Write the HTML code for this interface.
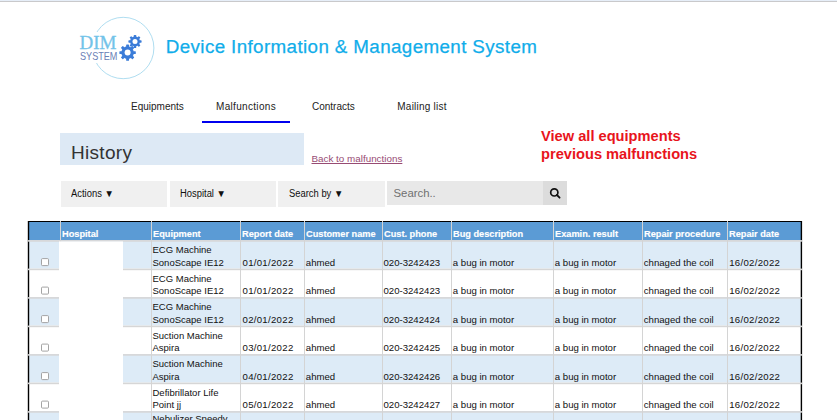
<!DOCTYPE html>
<html><head><meta charset="utf-8">
<style>
*{box-sizing:border-box;margin:0;padding:0}
html,body{width:837px;height:420px;overflow:hidden;background:#fff;font-family:"Liberation Sans",sans-serif;position:relative}
.abs{position:absolute;white-space:nowrap}
#topbar{position:absolute;left:0;top:0;width:837px;height:2px;background:linear-gradient(#e6eef8 0,#e6eef8 40%,#c9c9cb 40%,#c9c9cb 100%)}
#title{left:165.8px;top:35px;font-size:18.8px;letter-spacing:0.38px;color:#10adea;-webkit-text-stroke:0.25px #10adea;line-height:24px}
.nav{top:100.5px;font-size:10px;color:#222;line-height:12px}
#navline{left:202px;top:121px;width:88px;height:2px;background:#0000ee}
#hist{left:60px;top:133px;width:244px;height:32px;background:#dde9f5}
#histtxt{left:71px;top:141.5px;font-size:19px;letter-spacing:0.3px;line-height:22px;color:#333}
#back{left:311.5px;top:152.8px;font-size:9.85px;line-height:11px;color:#974b73;text-decoration:underline}
#red{left:541px;top:127px;font-size:14.65px;line-height:18px;color:#e8141c;font-weight:bold}
.btn{position:absolute;top:181px;height:26px;background:#f0f0f0}
.btxt{top:188px;font-size:10px;line-height:11px;color:#111;transform:scaleX(0.94);transform-origin:left top}
#search{left:387px;top:181px;width:156px;height:24px;background:#e8e8e8}
#stxt{left:393.5px;top:186.2px;font-size:11.35px;line-height:14px;color:#707070}
#sbtn{left:543px;top:181px;width:24px;height:24px;background:#dcdcdc}
.th{top:227.5px;font-size:9.6px;line-height:11px;color:#fff;font-weight:bold;-webkit-text-stroke:0.15px #fff;transform:scaleX(0.96);transform-origin:left top}
.td{font-size:9.6px;line-height:11px;color:#111}
.eq{font-size:9.5px;line-height:11px;color:#111}
.ph{font-size:9.6px}
.ch{font-size:9.6px}
.dt{letter-spacing:0.3px}
</style></head><body>
<div id="topbar"></div>

<!-- logo -->
<svg class="abs" style="left:0;top:0" width="180" height="90" viewBox="0 0 180 90">
  <circle cx="123.2" cy="48" r="30.7" fill="none" stroke="#a6d9ee" stroke-width="0.9"/>
  <rect x="77" y="32" width="24" height="31" fill="#fff"/>
  <circle cx="127.6" cy="52.6" r="6.3" fill="#3b7cd8"/>
  <rect x="126.15" y="44.40" width="2.9" height="2.90" rx="0.6" fill="#3b7cd8" transform="rotate(0.0 127.6 52.6)"/>
  <rect x="126.15" y="44.40" width="2.9" height="2.90" rx="0.6" fill="#3b7cd8" transform="rotate(45.0 127.6 52.6)"/>
  <rect x="126.15" y="44.40" width="2.9" height="2.90" rx="0.6" fill="#3b7cd8" transform="rotate(90.0 127.6 52.6)"/>
  <rect x="126.15" y="44.40" width="2.9" height="2.90" rx="0.6" fill="#3b7cd8" transform="rotate(135.0 127.6 52.6)"/>
  <rect x="126.15" y="44.40" width="2.9" height="2.90" rx="0.6" fill="#3b7cd8" transform="rotate(180.0 127.6 52.6)"/>
  <rect x="126.15" y="44.40" width="2.9" height="2.90" rx="0.6" fill="#3b7cd8" transform="rotate(225.0 127.6 52.6)"/>
  <rect x="126.15" y="44.40" width="2.9" height="2.90" rx="0.6" fill="#3b7cd8" transform="rotate(270.0 127.6 52.6)"/>
  <rect x="126.15" y="44.40" width="2.9" height="2.90" rx="0.6" fill="#3b7cd8" transform="rotate(315.0 127.6 52.6)"/>
  <circle cx="127.6" cy="52.6" r="3.0" fill="#fff"/>
  <circle cx="135.0" cy="41.5" r="4.9" fill="#3b7cd8"/>
  <rect x="133.80" y="34.90" width="2.4" height="2.70" rx="0.6" fill="#3b7cd8" transform="rotate(0.0 135.0 41.5)"/>
  <rect x="133.80" y="34.90" width="2.4" height="2.70" rx="0.6" fill="#3b7cd8" transform="rotate(45.0 135.0 41.5)"/>
  <rect x="133.80" y="34.90" width="2.4" height="2.70" rx="0.6" fill="#3b7cd8" transform="rotate(90.0 135.0 41.5)"/>
  <rect x="133.80" y="34.90" width="2.4" height="2.70" rx="0.6" fill="#3b7cd8" transform="rotate(135.0 135.0 41.5)"/>
  <rect x="133.80" y="34.90" width="2.4" height="2.70" rx="0.6" fill="#3b7cd8" transform="rotate(180.0 135.0 41.5)"/>
  <rect x="133.80" y="34.90" width="2.4" height="2.70" rx="0.6" fill="#3b7cd8" transform="rotate(225.0 135.0 41.5)"/>
  <rect x="133.80" y="34.90" width="2.4" height="2.70" rx="0.6" fill="#3b7cd8" transform="rotate(270.0 135.0 41.5)"/>
  <rect x="133.80" y="34.90" width="2.4" height="2.70" rx="0.6" fill="#3b7cd8" transform="rotate(315.0 135.0 41.5)"/>
  <circle cx="135.0" cy="41.5" r="2.5" fill="#fff"/>
</svg>
<div class="abs" style="left:79.5px;top:33px;font-family:'Liberation Serif',serif;font-size:19px;line-height:19px;color:#72c3e9;-webkit-text-stroke:0.3px #72c3e9">DIM</div>
<div class="abs" style="left:79.8px;top:51.2px;font-size:10.6px;line-height:11px;color:#6a80b6;transform:scaleX(0.86);transform-origin:left top">SYSTEM</div>

<div id="title" class="abs">Device Information &amp; Management System</div>

<div class="abs nav" style="left:131px">Equipments</div>
<div class="abs nav" style="left:216px;letter-spacing:0.32px">Malfunctions</div>
<div class="abs nav" style="left:312px">Contracts</div>
<div class="abs nav" style="left:397.3px;letter-spacing:0.23px">Mailing list</div>
<div id="navline" class="abs"></div>

<div id="hist" class="abs"></div>
<div id="histtxt" class="abs">History</div>
<div id="back" class="abs">Back to malfunctions</div>
<div id="red" class="abs">View all equipments<br>previous malfunctions</div>

<div class="btn" style="left:61px;width:106px"></div>
<div class="btn" style="left:170px;width:106px"></div>
<div class="btn" style="left:278px;width:107px"></div>
<div class="abs btxt" style="left:71px">Actions &#9660;</div>
<div class="abs btxt" style="left:180px">Hospital &#9660;</div>
<div class="abs btxt" style="left:289px">Search by &#9660;</div>
<div id="search" class="abs"></div>
<div id="stxt" class="abs">Search..</div>
<div id="sbtn" class="abs"></div>
<svg class="abs" style="left:543px;top:181px" width="24" height="24" viewBox="0 0 24 24">
  <circle cx="11.3" cy="11.4" r="3.6" fill="none" stroke="#111" stroke-width="1.7"/>
  <line x1="13.9" y1="14" x2="16.6" y2="16.7" stroke="#111" stroke-width="1.8" stroke-linecap="round"/>
</svg>

<svg class="abs" style="left:0;top:0" width="837" height="420" viewBox="0 0 837 420">
<rect x="28.5" y="221.5" width="773" height="19" fill="#5b9bd5"/>
<rect x="28.5" y="240.00" width="773" height="28.50" fill="#ddebf7"/>
<rect x="28.5" y="297.00" width="773" height="28.50" fill="#ddebf7"/>
<rect x="28.5" y="354.00" width="773" height="28.50" fill="#ddebf7"/>
<rect x="28.5" y="411.00" width="773" height="28.50" fill="#ddebf7"/>
<rect x="28" y="221" width="774" height="1" fill="#000"/>
<rect x="27.8" y="221" width="1.4" height="200" fill="#000"/>
<rect x="800.7" y="221" width="1.4" height="200" fill="#000"/>
<rect x="28" y="240.10" width="774" height="1.6" fill="#d6d6d6"/>
<rect x="28" y="268.60" width="774" height="1.6" fill="#d6d6d6"/>
<rect x="28" y="297.10" width="774" height="1.6" fill="#d6d6d6"/>
<rect x="28" y="325.60" width="774" height="1.6" fill="#d6d6d6"/>
<rect x="28" y="354.10" width="774" height="1.6" fill="#d6d6d6"/>
<rect x="28" y="382.60" width="774" height="1.6" fill="#d6d6d6"/>
<rect x="28" y="411.10" width="774" height="1.6" fill="#d6d6d6"/>
<rect x="60" y="221" width="1" height="200" fill="#d4d4d4"/>
<rect x="151" y="221" width="1" height="200" fill="#d4d4d4"/>
<rect x="240" y="221" width="1" height="200" fill="#d4d4d4"/>
<rect x="304" y="221" width="1" height="200" fill="#d4d4d4"/>
<rect x="382" y="221" width="1" height="200" fill="#d4d4d4"/>
<rect x="451" y="221" width="1" height="200" fill="#d4d4d4"/>
<rect x="553" y="221" width="1" height="200" fill="#d4d4d4"/>
<rect x="642" y="221" width="1" height="200" fill="#d4d4d4"/>
<rect x="727" y="221" width="1" height="200" fill="#d4d4d4"/>
<rect x="59" y="241.5" width="64" height="180" fill="#fff"/>
<rect x="41.5" y="258.60" width="7" height="7" rx="1" fill="#fff" stroke="#9a9a9a" stroke-width="0.9"/>
<rect x="41.5" y="287.10" width="7" height="7" rx="1" fill="#fff" stroke="#9a9a9a" stroke-width="0.9"/>
<rect x="41.5" y="315.60" width="7" height="7" rx="1" fill="#fff" stroke="#9a9a9a" stroke-width="0.9"/>
<rect x="41.5" y="344.10" width="7" height="7" rx="1" fill="#fff" stroke="#9a9a9a" stroke-width="0.9"/>
<rect x="41.5" y="372.60" width="7" height="7" rx="1" fill="#fff" stroke="#9a9a9a" stroke-width="0.9"/>
<rect x="41.5" y="401.10" width="7" height="7" rx="1" fill="#fff" stroke="#9a9a9a" stroke-width="0.9"/>
<rect x="41.5" y="429.60" width="7" height="7" rx="1" fill="#fff" stroke="#9a9a9a" stroke-width="0.9"/>
</svg>
<div class="abs th" style="left:62px">Hospital</div>
<div class="abs th" style="left:153px">Equipment</div>
<div class="abs th" style="left:242px">Report date</div>
<div class="abs th" style="left:306px">Customer name</div>
<div class="abs th" style="left:384px">Cust. phone</div>
<div class="abs th" style="left:453px">Bug description</div>
<div class="abs th" style="left:555px">Examin. result</div>
<div class="abs th" style="left:644px">Repair procedure</div>
<div class="abs th" style="left:729px">Repair date</div>
<div class="abs eq" style="left:152.5px;top:244.2px">ECG Machine</div>
<div class="abs eq" style="left:152.5px;top:256.8px">SonoScape IE12</div>
<div class="abs td dt" style="left:242.5px;top:256.7px">01/01/2022</div>
<div class="abs td" style="left:305.8px;top:256.7px">ahmed</div>
<div class="abs td ph" style="left:383.5px;top:256.7px">020-3242423</div>
<div class="abs td" style="left:452.8px;top:256.7px">a bug in motor</div>
<div class="abs td" style="left:554.8px;top:256.7px">a bug in motor</div>
<div class="abs td ch" style="left:643.8px;top:256.7px">chnaged the coil</div>
<div class="abs td dt" style="left:729.2px;top:256.7px">16/02/2022</div>
<div class="abs eq" style="left:152.5px;top:272.7px">ECG Machine</div>
<div class="abs eq" style="left:152.5px;top:285.3px">SonoScape IE12</div>
<div class="abs td dt" style="left:242.5px;top:285.2px">01/01/2022</div>
<div class="abs td" style="left:305.8px;top:285.2px">ahmed</div>
<div class="abs td ph" style="left:383.5px;top:285.2px">020-3242423</div>
<div class="abs td" style="left:452.8px;top:285.2px">a bug in motor</div>
<div class="abs td" style="left:554.8px;top:285.2px">a bug in motor</div>
<div class="abs td ch" style="left:643.8px;top:285.2px">chnaged the coil</div>
<div class="abs td dt" style="left:729.2px;top:285.2px">16/02/2022</div>
<div class="abs eq" style="left:152.5px;top:301.2px">ECG Machine</div>
<div class="abs eq" style="left:152.5px;top:313.8px">SonoScape IE12</div>
<div class="abs td dt" style="left:242.5px;top:313.7px">02/01/2022</div>
<div class="abs td" style="left:305.8px;top:313.7px">ahmed</div>
<div class="abs td ph" style="left:383.5px;top:313.7px">020-3242424</div>
<div class="abs td" style="left:452.8px;top:313.7px">a bug in motor</div>
<div class="abs td" style="left:554.8px;top:313.7px">a bug in motor</div>
<div class="abs td ch" style="left:643.8px;top:313.7px">chnaged the coil</div>
<div class="abs td dt" style="left:729.2px;top:313.7px">16/02/2022</div>
<div class="abs eq" style="left:152.5px;top:329.7px">Suction Machine</div>
<div class="abs eq" style="left:152.5px;top:342.3px">Aspira</div>
<div class="abs td dt" style="left:242.5px;top:342.2px">03/01/2022</div>
<div class="abs td" style="left:305.8px;top:342.2px">ahmed</div>
<div class="abs td ph" style="left:383.5px;top:342.2px">020-3242425</div>
<div class="abs td" style="left:452.8px;top:342.2px">a bug in motor</div>
<div class="abs td" style="left:554.8px;top:342.2px">a bug in motor</div>
<div class="abs td ch" style="left:643.8px;top:342.2px">chnaged the coil</div>
<div class="abs td dt" style="left:729.2px;top:342.2px">16/02/2022</div>
<div class="abs eq" style="left:152.5px;top:358.2px">Suction Machine</div>
<div class="abs eq" style="left:152.5px;top:370.8px">Aspira</div>
<div class="abs td dt" style="left:242.5px;top:370.7px">04/01/2022</div>
<div class="abs td" style="left:305.8px;top:370.7px">ahmed</div>
<div class="abs td ph" style="left:383.5px;top:370.7px">020-3242426</div>
<div class="abs td" style="left:452.8px;top:370.7px">a bug in motor</div>
<div class="abs td" style="left:554.8px;top:370.7px">a bug in motor</div>
<div class="abs td ch" style="left:643.8px;top:370.7px">chnaged the coil</div>
<div class="abs td dt" style="left:729.2px;top:370.7px">16/02/2022</div>
<div class="abs eq" style="left:152.5px;top:386.7px">Defibrillator Life</div>
<div class="abs eq" style="left:152.5px;top:399.3px">Point jj</div>
<div class="abs td dt" style="left:242.5px;top:399.2px">05/01/2022</div>
<div class="abs td" style="left:305.8px;top:399.2px">ahmed</div>
<div class="abs td ph" style="left:383.5px;top:399.2px">020-3242427</div>
<div class="abs td" style="left:452.8px;top:399.2px">a bug in motor</div>
<div class="abs td" style="left:554.8px;top:399.2px">a bug in motor</div>
<div class="abs td ch" style="left:643.8px;top:399.2px">chnaged the coil</div>
<div class="abs td dt" style="left:729.2px;top:399.2px">16/02/2022</div>
<div class="abs eq" style="left:152.5px;top:413.0px">Nebulizer Speedy</div>
<div class="abs td dt" style="left:242.5px;top:427.7px">06/01/2022</div>
<div class="abs td" style="left:305.8px;top:427.7px">ahmed</div>
<div class="abs td ph" style="left:383.5px;top:427.7px">020-3242428</div>
<div class="abs td" style="left:452.8px;top:427.7px">a bug in motor</div>
<div class="abs td" style="left:554.8px;top:427.7px">a bug in motor</div>
<div class="abs td ch" style="left:643.8px;top:427.7px">chnaged the coil</div>
<div class="abs td dt" style="left:729.2px;top:427.7px">16/02/2022</div>
</body></html>
